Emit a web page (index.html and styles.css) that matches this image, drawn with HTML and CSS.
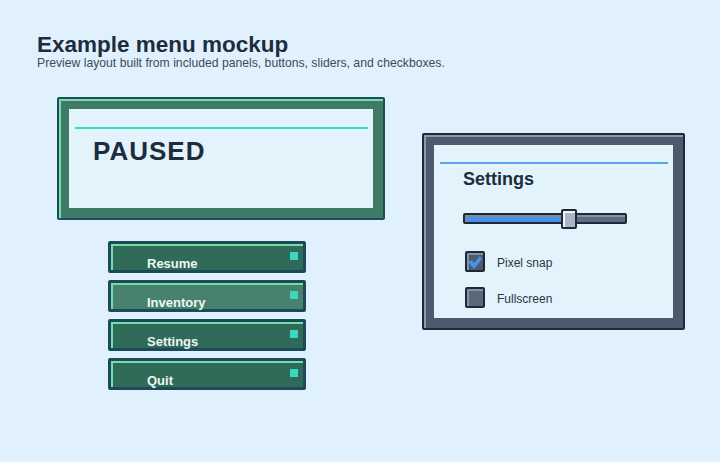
FILE: index.html
```html
<!DOCTYPE html>
<html>
<head lang="en">
    <meta charset="UTF-8">
    <title>Example menu mockup</title>
    <link rel="stylesheet" href="styles.css">
</head>
<body>
<div class="page">
    <div class="head">
        <h1>Example menu mockup</h1>
        <p>Preview layout built from included panels, buttons, sliders, and checkboxes.</p>
    </div>
    <div class="stage">
        <div class="left">
            <div class="pause">
                <div class="pause-in">
                    <div class="rule"></div>
                    <h2>PAUSED</h2>
                </div>
            </div>
            <ul class="menu">
                <li class="btn">Resume</li>
                <li class="btn hover">Inventory</li>
                <li class="btn">Settings</li>
                <li class="btn">Quit</li>
            </ul>
        </div>
        <div class="settings">
            <div class="settings-in">
                <div class="rule"></div>
                <h3>Settings</h3>
                <div class="slider">
                    <div class="track"><div class="fill"></div></div>
                    <div class="thumb"></div>
                </div>
                <div class="check">
                    <span class="box on">
                        <svg width="16" height="16" viewBox="0 0 16 16">
                            <path d="M1 8 L5 6 L7 9 L13 2 L15 5 L7 15 Z" fill="#4a92e8"/>
                        </svg>
                    </span>
                    <span class="lbl">Pixel snap</span>
                </div>
                <div class="check">
                    <span class="box"></span>
                    <span class="lbl">Fullscreen</span>
                </div>
            </div>
        </div>
    </div>
</div>
</body>
</html>
```

FILE: styles.css
```css
*{
    margin: 0;
    padding: 0;
    box-sizing: border-box;
}
body{
    background: #e0f1fd;
    font-family: "Liberation Sans", Arial, sans-serif;
    color: #1e2d3d;
}
li{
    list-style: none;
}
.page{
    padding: 31px 0 0 37px;
}
.head h1{
    font-size: 22.5px;
    line-height: 27px;
    font-weight: bold;
    color: #1e2d3d;
}
.head p{
    font-size: 12.2px;
    line-height: 14px;
    color: #3b4a5a;
    margin-top: -2px;
}
.stage{
    display: flex;
    align-items: flex-start;
    margin-top: 27px;
    margin-left: 20px;
}
.pause{
    width: 328px;
    height: 123px;
    background: #3e7a66;
    border: 2px solid #1e4e5c;
    border-radius: 2px;
    box-shadow: inset 2px 2px 0 #78dcae;
    padding: 10px;
}
.pause-in{
    height: 100%;
    background: #e3f3fc;
    padding: 18px 5px 0 6px;
}
.rule{
    height: 2px;
    background: #3dd6c0;
}
.pause h2{
    font-size: 26px;
    line-height: 26px;
    font-weight: bold;
    color: #1e2d3d;
    margin: 9px 0 0 18px;
    letter-spacing: 1px;
}
.menu{
    display: flex;
    flex-direction: column;
    gap: 7px;
    margin: 21px 0 0 51px;
}
.btn{
    position: relative;
    width: 198px;
    height: 32px;
    background: #2f6b58;
    border: 3px solid #1c4a5b;
    border-radius: 2px;
    box-shadow: inset 2px 2px 0 #74dea6;
    padding: 12px 0 0 36px;
    font-size: 13px;
    line-height: 16px;
    font-weight: bold;
    color: #eef7f2;
}
.btn.hover{
    background: #48826e;
}
.btn:after{
    content: "";
    position: absolute;
    top: 8px;
    right: 5px;
    width: 8px;
    height: 8px;
    background: #3dd6c0;
}
.settings{
    width: 263px;
    height: 197px;
    margin: 36px 0 0 37px;
    background: #4b5a6e;
    border: 2px solid #1e2838;
    border-radius: 2px;
    box-shadow: inset 2px 2px 0 #8d9aab;
    padding: 10px;
}
.settings-in{
    height: 100%;
    background: #e3f3fc;
    padding: 17px 5px 0 6px;
}
.settings .rule{
    background: #5aa6ee;
}
.settings h3{
    font-size: 18px;
    line-height: 18px;
    font-weight: bold;
    color: #1e2d3d;
    margin: 6px 0 0 23px;
}
.slider{
    position: relative;
    width: 164px;
    height: 20px;
    margin: 21px 0 0 23px;
    padding-top: 4px;
}
.track{
    height: 11px;
    background: #5d6c80;
    border: 2px solid #1e2838;
    border-radius: 2px;
    box-shadow: inset 0 2px 0 #8592a3;
}
.fill{
    width: 98px;
    height: 100%;
    background: #4a92e8;
    box-shadow: inset 2px 2px 0 #7d8a99;
}
.thumb{
    position: absolute;
    top: 0;
    left: 98px;
    width: 16px;
    height: 20px;
    background: #a9b6c6;
    border: 2px solid #1e2838;
    border-radius: 2px;
    box-shadow: inset 2px 2px 0 #eef4fa;
}
.check{
    display: flex;
    align-items: center;
    gap: 12px;
    margin: 22px 0 0 25px;
}
.check + .check{
    margin-top: 15px;
}
.box{
    display: flex;
    align-items: center;
    justify-content: center;
    width: 20px;
    height: 21px;
    background: #5a687c;
    border: 2px solid #1e2838;
    border-radius: 2px;
    box-shadow: inset 2px 2px 0 #8592a3;
}
.box.on{
    background: #4b5a6e;
}
.lbl{
    font-size: 12px;
    line-height: 14px;
    padding-top: 2px;
    color: #2a3542;
}
```
